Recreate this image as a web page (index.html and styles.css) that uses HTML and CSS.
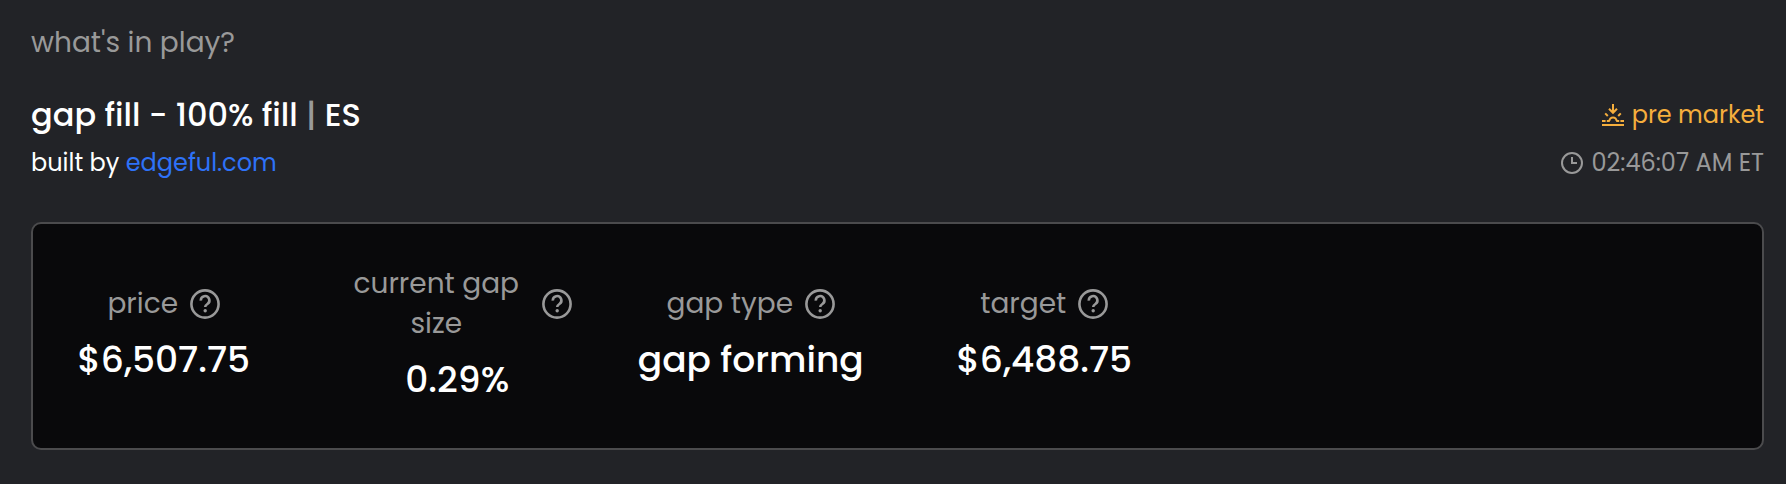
FILE: index.html
```
<!DOCTYPE html>
<html lang="en">
<head>
  <meta charset="UTF-8">
  <meta name="viewport" content="width=device-width, initial-scale=1.0">
  <title>what's in play?</title>
  <link rel="stylesheet" href="styles.css">
</head>
<body>

  <!-- shared icon -->
  <svg class="sprite" aria-hidden="true">
    <symbol id="help" viewBox="0 0 30 30">
      <circle cx="15" cy="15" r="13.6"/>
      <path d="M10.8 11.6a4.3 4.3 0 1 1 6.6 3.4c-1.5 1-2.2 1.5-2.2 3"/>
      <circle class="dot" cx="15.2" cy="21.8" r="1.7"/>
    </symbol>
  </svg>

  <main class="panel">
    <h1>what's in play?</h1>

    <header>
      <div class="info">
        <h2>gap fill - 100% fill <span class="divider">|</span> ES</h2>
        <p class="author">built by <a href="https://edgeful.com">edgeful.com</a></p>
      </div>
      <div class="status">
        <p class="session">
          <svg viewBox="0 0 22 22" aria-hidden="true">
            <path d="M0 21h22M0 17h3.6M18.4 17H22M5.8 18v-1h2M16.2 18v-1h-2M7.4 17a3.6 3.6 0 0 1 7.2 0M11 0v9M7 4.8l4 4 4-4M3.2 9.4l2.6 2.6M18.8 9.4l-2.6 2.6"/>
          </svg>
          pre market
        </p>
        <p class="clock">
          <svg viewBox="0 0 22 22" aria-hidden="true">
            <circle cx="11" cy="11" r="10"/>
            <path d="M11 5v6h5"/>
          </svg>
          <time>02:46:07 AM ET</time>
        </p>
      </div>
    </header>

    <dl class="stats">
      <div class="stat">
        <dt><span>price</span> <button type="button" aria-label="About price"><svg><use href="#help"/></svg></button></dt>
        <dd>$6,507.75</dd>
      </div>
      <div class="stat">
        <dt><span>current gap size</span> <button type="button" aria-label="About current gap size"><svg><use href="#help"/></svg></button></dt>
        <dd>0.29%</dd>
      </div>
      <div class="stat">
        <dt><span>gap type</span> <button type="button" aria-label="About gap type"><svg><use href="#help"/></svg></button></dt>
        <dd>gap forming</dd>
      </div>
      <div class="stat">
        <dt><span>target</span> <button type="button" aria-label="About target"><svg><use href="#help"/></svg></button></dt>
        <dd>$6,488.75</dd>
      </div>
    </dl>
  </main>

</body>
</html>
```

FILE: styles.css
```
* {
  box-sizing: border-box;
}

body {
  margin: 0;
  background-color: #222327;
  color: #fff;
  font-family: Poppins, Inter, sans-serif;
}

h1, h2, p, dl, dd {
  margin: 0;
}

.sprite {
  display: none;
}

svg {
  fill: none;
  stroke: currentColor;
  stroke-width: 2;
}

.panel {
  padding: 23px 22px 34px 31px;
}

h1 {
  color: #999;
  font-size: 28px;
  font-weight: 400;
  line-height: 40px;
}

header {
  display: flex;
  justify-content: space-between;
  margin-top: 28px;
  margin-bottom: 35px;
}

h2 {
  font-size: 32px;
  font-weight: 500;
  line-height: 48px;
}

.divider {
  color: #999;
}

.author,
.session,
.clock {
  font-size: 24px;
  line-height: 48px;
}

.author a {
  color: #2e72f8;
  text-decoration: none;
}

.session,
.clock {
  display: flex;
  align-items: center;
  justify-content: flex-end;
  gap: 8px;
}

.session {
  color: #f5ae3d;
}

.clock {
  color: #999;
}

.session svg,
.clock svg {
  width: 22px;
  height: 22px;
}

.stats {
  display: grid;
  grid-template-columns: repeat(6, 1fr);
  align-items: center;
  gap: 64px;
  padding: 40px 16px;
  background-color: #09090b;
  border: 2px solid #4b4b4d;
  border-radius: 10px;
}

.stat {
  text-align: center;
}

.stat dt {
  display: flex;
  align-items: center;
  justify-content: center;
  gap: 12px;
  color: #999;
  font-size: 28px;
  line-height: 40px;
}

.stat dd {
  margin-top: 8px;
  font-size: 36px;
  font-weight: 500;
  line-height: 56px;
}

.stat button {
  flex: none;
  width: 30px;
  height: 30px;
  padding: 0;
  background: none;
  border: none;
  color: inherit;
  cursor: pointer;
}

.stat svg {
  display: block;
  width: 30px;
  height: 30px;
  stroke-width: 2.6;
}

.dot {
  fill: currentColor;
  stroke: none;
}
```
